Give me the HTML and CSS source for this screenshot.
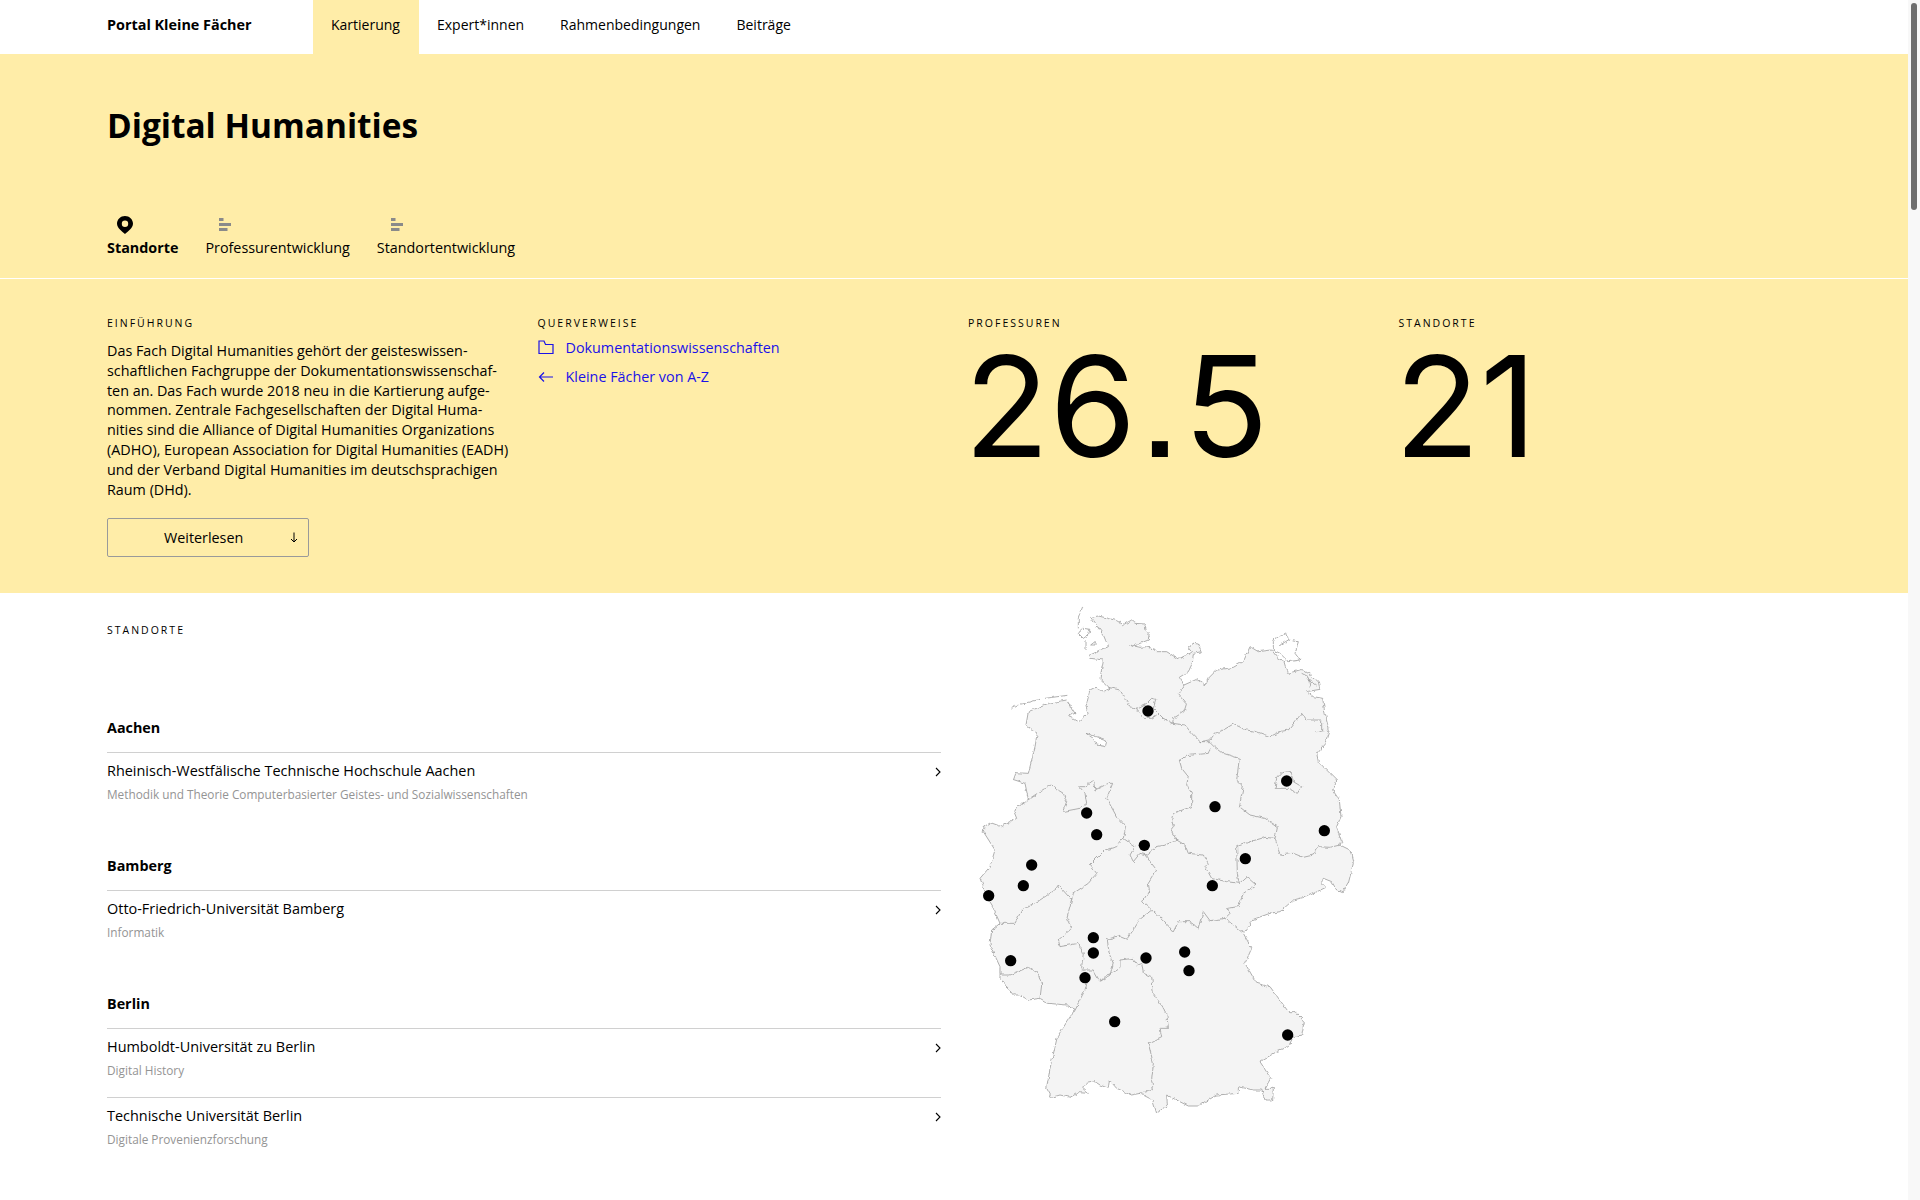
FILE: index.html
```html
<!DOCTYPE html>
<html lang="de">
<head>
<meta charset="utf-8">
<title>Digital Humanities – Portal Kleine Fächer</title>
<link rel="stylesheet" href="styles.css">
</head>
<body>
<div class="page">
<div class="content">
  <header class="nav">
    <a class="brand">Portal Kleine Fächer</a>
    <nav class="nav-items">
      <a class="nav-item active">Kartierung</a>
      <a class="nav-item">Expert*innen</a>
      <a class="nav-item">Rahmenbedingungen</a>
      <a class="nav-item">Beiträge</a>
    </nav>
  </header>
  <section class="hero">
    <div class="hero-top">
      <h1>Digital Humanities</h1>
      <div class="tabs">
        <a class="tab tab-on">
          <svg class="tab-icon" width="16" height="18" viewBox="0 0 16 18"><path fill="#000" fill-rule="evenodd" d="M8 0C3.600 0 0 3.400 0 7.600 0 12.200 5.200 15.600 8 18 10.800 15.600 16 12.200 16 7.600 16 3.400 12.400 0 8 0ZM8 4.500A3.200 3.200 0 1 1 8 10.900 3.200 3.200 0 1 1 8 4.500Z"/></svg>
          <span>Standorte</span>
        </a>
        <a class="tab">
          <svg class="tab-icon" width="16" height="18" viewBox="0 0 16 18"><path fill="#8a8a8a" d="M2 2h4.500v3H2zM2 7h12v3H2zM2 12h8.500v3H2z"/></svg>
          <span>Professurentwicklung</span>
        </a>
        <a class="tab">
          <svg class="tab-icon" width="16" height="18" viewBox="0 0 16 18"><path fill="#8a8a8a" d="M2 2h4.500v3H2zM2 7h12v3H2zM2 12h8.500v3H2z"/></svg>
          <span>Standortentwicklung</span>
        </a>
      </div>
    </div>
    <div class="hero-grid">
      <div class="col">
        <h2 class="label">Einführung</h2>
        <p class="intro">Das Fach Digital Humanities gehört der geisteswissen-<br>schaftlichen Fachgruppe der Dokumentationswissenschaf-<br>ten an. Das Fach wurde 2018 neu in die Kartierung aufge-<br>nommen. Zentrale Fachgesellschaften der Digital Huma-<br>nities sind die Alliance of Digital Humanities Organizations<br>(ADHO), European Association for Digital Humanities (EADH)<br>und der Verband Digital Humanities im deutschsprachigen<br>Raum (DHd).</p>
        <button class="more"><span>Weiterlesen</span><svg class="more-icon" width="8" height="11" viewBox="0 0 8 11"><path d="M4 0.500V10M1 7l3 3 3-3" fill="none" stroke="#000" stroke-width="1"/></svg></button>
      </div>
      <div class="col">
        <h2 class="label">Querverweise</h2>
        <ul class="links">
          <li><svg width="16" height="15" viewBox="0 0 16 15"><path d="M1 2.500V13.500H15V4.500H7.500L6 1H1Z" fill="none" stroke="#1a12e8" stroke-width="1.200"/></svg><a>Dokumentationswissenschaften</a></li>
          <li><svg width="16" height="15" viewBox="0 0 16 15"><path d="M15 8H1.500M6 3.500 1.500 8 6 12.500" fill="none" stroke="#1a12e8" stroke-width="1.200"/></svg><a>Kleine Fächer von A-Z</a></li>
        </ul>
      </div>
      <div class="col">
        <h2 class="label">Professuren</h2>
        <div class="stat">26<span class="dot">.</span>5</div>
      </div>
      <div class="col">
        <h2 class="label">Standorte</h2>
        <div class="stat">21</div>
      </div>
    </div>
  </section>
  <section class="places">
    <div class="list">
      <h2 class="label">Standorte</h2>
      <div class="city">
        <h3>Aachen</h3>
        <a class="row"><div><div class="uni">Rheinisch-Westfälische Technische Hochschule Aachen</div><div class="sub">Methodik und Theorie Computerbasierter Geistes- und Sozialwissenschaften</div></div><svg class="chev" width="6" height="10" viewBox="0 0 6 10"><path d="M1 1l4 4-4 4" fill="none" stroke="#000" stroke-width="1.100"/></svg></a>
      </div>
      <div class="city">
        <h3>Bamberg</h3>
        <a class="row"><div><div class="uni">Otto-Friedrich-Universität Bamberg</div><div class="sub">Informatik</div></div><svg class="chev" width="6" height="10" viewBox="0 0 6 10"><path d="M1 1l4 4-4 4" fill="none" stroke="#000" stroke-width="1.100"/></svg></a>
      </div>
      <div class="city">
        <h3>Berlin</h3>
        <a class="row"><div><div class="uni">Humboldt-Universität zu Berlin</div><div class="sub">Digital History</div></div><svg class="chev" width="6" height="10" viewBox="0 0 6 10"><path d="M1 1l4 4-4 4" fill="none" stroke="#000" stroke-width="1.100"/></svg></a>
        <a class="row"><div><div class="uni">Technische Universität Berlin</div><div class="sub">Digitale Provenienzforschung</div></div><svg class="chev" width="6" height="10" viewBox="0 0 6 10"><path d="M1 1l4 4-4 4" fill="none" stroke="#000" stroke-width="1.100"/></svg></a>
      </div>
    </div>
    <div class="map-wrap">
      <svg class="map" width="420" height="537" viewBox="0 9 1260 1611">
        <defs>
          <filter id="rough" filterUnits="userSpaceOnUse" x="0" y="0" width="1260" height="1620">
            <feTurbulence type="fractalNoise" baseFrequency="0.07" numOctaves="2" seed="4"/>
            <feDisplacementMap in="SourceGraphic" scale="12" xChannelSelector="R" yChannelSelector="G"/>
          </filter>
        </defs>
        <g filter="url(#rough)">
        <path class="land" d="M392 82L415 78 445 85 470 92 490 104 515 90 525 100 555 102 558 120 568 128 565 150 540 160 520 170 510 165 540 172 560 170 585 178 590 185 620 185 655 207 690 190 697 185 685 170 700 160 715 162 724 185 700 190 697 220 685 245 658 262 672 285 710 268 735 285 745 265 770 240 820 232 850 215 870 170 895 185 935 180 950 200 975 215 985 250 1025 238 1045 250 1075 275 1080 298 1040 305 1060 320 1088 325 1095 370 1108 420 1095 460 1070 490 1075 515 1130 570 1118 600 1138 630 1143 680 1130 710 1145 755 1140 765 1170 780 1180 820 1165 880 1150 905 1130 900 1115 875 1090 865 1085 880 1098 892 1040 920 1000 930 960 965 930 970 880 988 850 1030 875 1075 855 1120 890 1180 930 1190 985 1265 1005 1265 1033 1295 1025 1335 1000 1340 985 1370 950 1385 900 1415 932 1465 915 1495 940 1495 938 1530 915 1530 905 1500 880 1500 835 1490 835 1510 770 1515 715 1548 685 1548 620 1515 622 1545 590 1570 578 1530 540 1510 515 1515 470 1495 448 1470 445 1495 420 1485 405 1475 380 1480 368 1495 385 1510 355 1508 330 1522 300 1515 275 1522 260 1495 270 1435 292 1340 345 1258 320 1245 265 1240 240 1225 205 1230 180 1215 160 1215 120 1165 120 1130 90 1065 95 1020 120 1000 100 955 85 930 60 865 90 830 105 780 70 725 72 710 92 698 125 710 170 685 160 660 205 628 195 580 158 568 165 548 205 550 225 470 232 430 198 405 205 365 265 340 320 330 345 370 325 378 352 395 385 370 378 350 390 300 405 292 430 305 450 295 420 265 430 210 392 205 390 195 445 170 430 135Z"/>
        <path class="line" d="M445 292L480 300 510 350 530 355 560 340 575 325 588 328 580 355 610 385 638 400 675 405 695 430 720 455 750 455 765 470 790 490 838 505 830 570 850 590 838 650 870 675 915 685 952 710 945 745 960 795 1000 790 1030 802 1060 795 1075 770 1110 772 1140 765"/>
        <path class="line" d="M672 285L655 310 680 340 672 365 640 385 638 400"/>
        <path class="line" d="M720 455L750 450 765 430 790 420 820 402 860 420 890 425 930 440 960 425 985 420 1025 370 1040 390 1085 390 1085 420 1070 425 1108 420"/>
        <path class="line" d="M750 475L745 490 680 497 658 510 665 535 685 560 680 585 695 610 695 650 640 670 635 690 640 710 632 720 650 750 675 765 685 790 730 795 745 820 735 830 755 865 800 875 838 880 832 850 830 770 870 755 915 742 945 745"/>
        <path class="line" d="M838 880L860 860 888 885 850 910 835 950 800 955 810 970 795 985 750 992 730 965 715 1015 690 995 655 995 640 1025 610 990 575 960"/>
        <path class="line" d="M795 985L820 1005 850 1030"/>
        <path class="line" d="M650 750L615 765 590 770 560 795 540 790 520 815 510 795 525 770 490 745"/>
        <path class="line" d="M555 795L590 840 565 880 568 900 548 935 575 960 540 988 520 1020 500 1048 475 1038 442 1048 447 1090 460 1120 450 1155 420 1175 400 1140 365 1140"/>
        <path class="line" d="M205 628L270 585 310 610 320 635 308 665 360 655 380 640 375 610 358 590 375 590 400 572 405 600 445 580 458 580 440 625 470 680 497 710 490 745 470 770 435 780 415 800 390 825 410 850 385 880 340 910 335 930 295 885 285 900 240 930 185 960 165 1000 120 1000"/>
        <path class="line" d="M335 930L320 985 335 1015 295 1050 300 1070 355 1060 370 1090 365 1130 385 1160 375 1200 345 1258"/>
        <path class="line" d="M120 1155L150 1155 205 1132 235 1150 245 1185 240 1225"/>
        <path class="line" d="M420 1175L440 1155 455 1150 480 1135 480 1110 520 1105 530 1125 545 1120 550 1150 575 1160 580 1210 620 1270 625 1315 600 1315 605 1340 565 1360 580 1420 575 1470 580 1500 540 1510"/>
        <path class="line" d="M530 355L535 365 550 385 575 385 590 375"/>
        <path class="line" d="M945 595L950 565 965 548 990 545 1000 575 1025 590 1012 610 985 595Z"/>
        <path class="lake" d="M378 430L410 440 440 450 437 470 410 465 400 445Z"/>
        <path class="line" d="M155 355L175 345M180 343L240 328M255 325L322 316M368 50L355 85 355 115M355 130L370 115 390 118 385 135 370 145ZM378 150L378 180M392 165L405 155 405 165Z"/>
        <path class="line" d="M940 155L945 145 980 128 985 150 1015 155 1005 190 1020 210 985 215 960 190 940 180ZM960 165L985 150M1025 250L1045 260 1050 290M1040 265L1070 285"/>
        </g>
        <g class="pins">
          <circle cx="564" cy="363" r="17"/><circle cx="980" cy="573" r="17"/><circle cx="765" cy="650" r="17"/><circle cx="380" cy="669" r="17"/><circle cx="410" cy="734" r="17"/><circle cx="553" cy="766" r="17"/><circle cx="1093" cy="722" r="17"/><circle cx="856" cy="806" r="17"/><circle cx="215" cy="825" r="17"/><circle cx="757" cy="887" r="17"/><circle cx="190" cy="887" r="17"/><circle cx="86" cy="917" r="17"/><circle cx="400" cy="1043" r="17"/><circle cx="400" cy="1089" r="17"/><circle cx="152" cy="1112" r="17"/><circle cx="375" cy="1163" r="17"/><circle cx="558" cy="1104" r="17"/><circle cx="674" cy="1086" r="17"/><circle cx="687" cy="1142" r="17"/><circle cx="464" cy="1295" r="17"/><circle cx="983" cy="1335" r="17"/>
        </g>
      </svg>
    </div>
  </section>
</div>
<div class="scrollbar"><div class="thumb"></div></div>
</div>
</body>
</html>
```
FILE: styles.css
```css
* { box-sizing: border-box; }
html, body { margin: 0; padding: 0; background: #fff; }
body { font-family: "Open Sans", sans-serif; font-size: 14.350px; color: #000; }
.page { display: flex; height: 1200px; overflow: hidden; }
.content { flex: 1; min-width: 0; }
.scrollbar { width: 12px; background: #f8f8f8; padding: 3px; }
.thumb { height: 207px; background: #6e6e6e; border-radius: 3px; }

.nav { display: flex; height: 54px; padding-left: 107px; align-items: stretch; }
.brand { width: 206px; font-weight: 700; font-size: 14.400px; padding-top: 15px; line-height: 20px; }
.nav-items { display: flex; font-size: 14px; }
.nav-item { padding: 15px 18px 0; line-height: 20px; }
.nav-item.active { background: #ffeda8; padding-right: 19px; }

.hero { background: #ffeda8; height: 539px; }
.hero-top { height: 225px; padding: 0 107px; border-bottom: 1px solid #fff; display: flex; flex-direction: column; }
h1 { margin: 0; padding-top: 51px; font-size: 33.400px; line-height: 40px; font-weight: 700; }
.tabs { display: flex; gap: 27px; margin-top: 71px; }
.tab { display: flex; flex-direction: column; align-items: flex-start; gap: 4px; }
.tab-on span { font-weight: 700; }
.tab-icon { display: block; margin-left: 12px; }
.tab-on .tab-icon { margin-left: 10px; }

.hero-grid { display: grid; grid-template-columns: repeat(4, 430.5px); padding: 36px 0 0 107px; }
.label { margin: 0; font-size: 10.500px; line-height: 16px; font-weight: 400; letter-spacing: 2px; text-transform: uppercase; }
.intro { margin: 10px 0 0; width: 420px; line-height: 19.800px; white-space: nowrap; }
.more { display: flex; align-items: center; justify-content: space-between; width: 202px; height: 39px; margin-top: 19px; padding: 0 10px 0 56px; background: none; border: 1px solid #9a9a9a; border-radius: 2px; font: inherit; color: #000; }
.more-icon { display: block; }
.links { list-style: none; margin: 2px 0 0; padding: 0; }
.links li { display: flex; align-items: center; gap: 12px; height: 29px; }
.links a { color: #1a12e8; }
.links svg { display: block; flex: none; }
.stat { font-family: "Inter", "Liberation Sans", sans-serif; font-feature-settings: "ss07"; font-size: 140px; line-height: 110px; margin: 20px 0 0 -4px; }
.dot { margin: 0 3.500px; }

.places { display: grid; grid-template-columns: 834px 1fr; padding-left: 107px; }
.list { padding-top: 29px; }
h3 { margin: 0; font-size: 14.350px; font-weight: 700; line-height: 20px; padding-bottom: 14px; }
.list .label + .city { margin-top: 80px; }
.city + .city { margin-top: 35px; }
.row { display: flex; justify-content: space-between; align-items: flex-start; height: 69px; border-top: 1px solid #d0d0d0; padding-top: 8px; }
.uni { line-height: 19px; font-size: 14.450px; }
.sub { margin-top: 6px; font-size: 11.800px; line-height: 16px; color: #949494; }
.chev { display: block; margin-top: 6px; }
.map-wrap { padding-left: 19px; }
.map { display: block; overflow: visible; }
.land { fill: #f4f4f4; stroke: #9c9c9c; stroke-width: 2.400; }
.line { fill: none; stroke: #9c9c9c; stroke-width: 2.400; }
.lake { fill: #fff; stroke: #9c9c9c; stroke-width: 2.400; }
.pins circle { fill: #000; }
```
